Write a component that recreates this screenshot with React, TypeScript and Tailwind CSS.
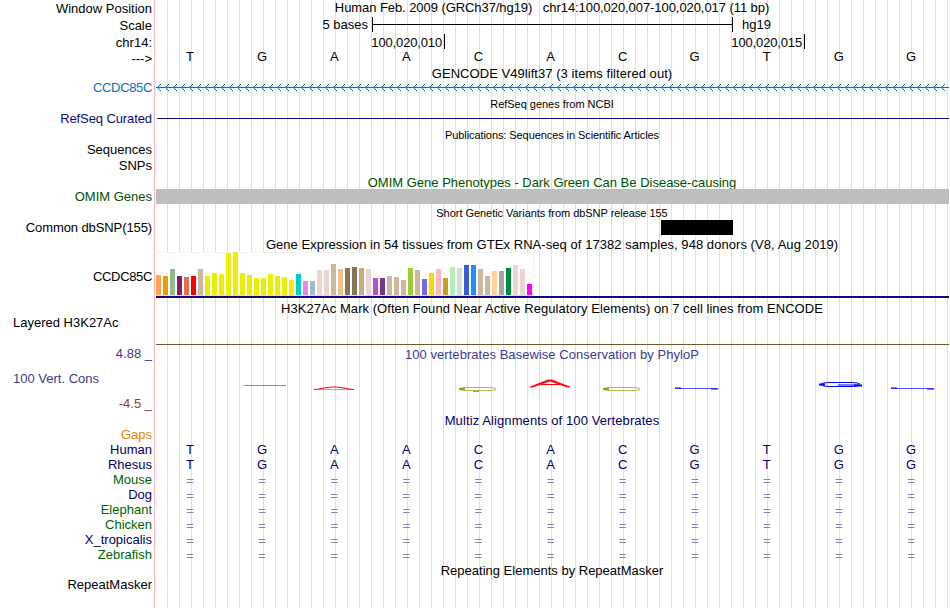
import React from 'react';

type Label = { text: string; className: string };

const labels: Label[] = [
  { text: 'Window Position', className: 'mt-px' },
  { text: 'Scale', className: 'mt-0.5' },
  { text: 'chr14:', className: 'mt-0.5' },
  { text: '--->', className: 'mt-px' },
  { text: 'CCDC85C', className: 'mt-[14px] tracking-[-0.35px] text-[#0c6eb4]' },
  { text: 'RefSeq Curated', className: 'mt-4 tracking-[-0.1px] text-[#0c0c78]' },
  { text: 'Sequences', className: 'mt-4' },
  { text: 'SNPs', className: 'mt-px' },
  { text: 'OMIM Genes', className: 'mt-4 text-[#005000]' },
  { text: 'Common dbSNP(155)', className: 'mt-4 tracking-[-0.1px]' },
  { text: 'CCDC85C', className: 'mt-[34px] tracking-[-0.35px]' },
  { text: 'Layered H3K27Ac', className: 'mt-[31px] self-start pl-[13px]' },
  { text: '4.88 _', className: 'mt-4 text-[#3c3c8c]' },
  { text: '100 Vert. Cons', className: 'mt-2.5 self-start pl-[13px] text-[#3c3c8c]' },
  { text: '-4.5 _', className: 'mt-2.5 text-[#8c3c3c]' },
  { text: 'Gaps', className: 'mt-4 text-[#e68200]' },
  { text: 'Human', className: 'text-[#000064]' },
  { text: 'Rhesus', className: 'text-[#000064]' },
  { text: 'Mouse', className: 'text-[#006400]' },
  { text: 'Dog', className: 'text-[#000064]' },
  { text: 'Elephant', className: 'text-[#006400]' },
  { text: 'Chicken', className: 'text-[#006400]' },
  { text: 'X_tropicalis', className: 'text-[#000064]' },
  { text: 'Zebrafish', className: 'text-[#006400]' },
  { text: 'RepeatMasker', className: 'mt-[15px]' },
];

const bases = 'TGAACACGTGG'.split('');

// [colour, height in px] for each of the 54 tissues
const tissues: [string, number][] = [
  ['#ffa54f', 20], ['#ee9a00', 19], ['#8fbc8f', 26], ['#8b1c62', 19], ['#ee6a50', 18], ['#ff0000', 19],
  ['#cdb79e', 26], ['#eeee00', 19], ['#eeee00', 22], ['#eeee00', 21], ['#eeee00', 42], ['#eeee00', 43],
  ['#eeee00', 22], ['#eeee00', 20], ['#eeee00', 17], ['#eeee00', 17], ['#eeee00', 21], ['#eeee00', 19],
  ['#eeee00', 18], ['#eeee00', 15], ['#00cdcd', 21], ['#ee82ee', 14], ['#9ac0cd', 14], ['#eed5d2', 25],
  ['#eed5d2', 25], ['#cdb79e', 31], ['#eec591', 26], ['#8b7355', 27], ['#8b7355', 28], ['#cdaa7d', 27],
  ['#eed5d2', 26], ['#b452cd', 17], ['#7a378b', 17], ['#cdb79e', 19], ['#cdb79e', 18], ['#cdb79e', 15],
  ['#9acd32', 27], ['#cdb79e', 25], ['#7a67ee', 16], ['#ffd700', 22], ['#ffb6c1', 26], ['#cd9b1d', 17],
  ['#b4eeb4', 28], ['#d9d9d9', 27], ['#3a5fcd', 30], ['#1e90ff', 30], ['#cdb79e', 26], ['#cdb79e', 19],
  ['#ffd39b', 24], ['#a6a6a6', 24], ['#008b45', 27], ['#eed5d2', 30], ['#eed5d2', 26], ['#ff00ff', 11],
];

const Title = ({ className, children }: { className: string; children: React.ReactNode }) => (
  <div className={`w-[794px] text-center whitespace-pre ${className}`}>{children}</div>
);

const BaseRow = ({ letters, className = '' }: { letters: string[]; className?: string }) => (
  <div className={`-ml-px grid h-[15px] w-[793px] grid-cols-11 text-center ${className}`}>
    {letters.map((letter, i) => (
      <span key={i}>{letter}</span>
    ))}
  </div>
);

const GeneArrows = () => (
  <svg className="mt-[3px] block" width="794" height="7" shapeRendering="crispEdges">
    <defs>
      <pattern id="arrow" x="1" width="8" height="7" patternUnits="userSpaceOnUse">
        <path d="M1 3h1v1h-1z M2 2h1v1h-1z M2 4h1v1h-1z M3 1h1v1h-1z M3 5h1v1h-1z M4 0h1v1h-1z M4 6h1v1h-1z" fill="#0c6eb4" />
      </pattern>
    </defs>
    <rect x="1" width="793" height="7" fill="url(#arrow)" />
    <rect x="1" y="3" width="793" height="1" fill="#0c6eb4" />
  </svg>
);

const ExpressionTrack = () => (
  <div>
    <div className="ml-px flex h-11 w-[378px] items-end gap-0.5 border-t border-r border-b border-[#f0f0f0] border-b-[#dcdcdc] bg-white">
      {tissues.map(([color, height], i) => (
        <div key={i} className="w-[5px] shrink-0" style={{ height, backgroundColor: color }} />
      ))}
    </div>
    <div className="ml-px h-0.5 bg-[#0c0c78]" />
  </div>
);

// Sequence logo, letters squashed to their conservation score
const ConservationLogo = () => (
  <svg className="mt-3 block" width="794" height="22" fill="none">
    <path d="M89 11.5h42" stroke="#7878ff" />
    <path d="M163 15.5h35" stroke="#b4b450" />
    <path d="M159 15.5q4 0 10-1.500q6-1 10-1t10 1q6 1.500 10 1.500" stroke="#f00" />
    <path d="M341 14.500q-2-1-6-1h-24q-6 0-6 1.500t6 1.500h24q4 0 6-1" stroke="#b4b450" />
    <path d="M304 15h6" stroke="#a0a000" strokeWidth="2" />
    <path d="M318 17.500h6" stroke="#0f0" />
    <path d="M375 13L378 13L395 7L412 13L415 13L397 6L393 6Z" fill="#f00" stroke="#f00" strokeWidth="0.800" />
    <path d="M386 10.500h18" stroke="#f00" />
    <path d="M485 14.500q-2-1-6-1h-24q-6 0-6 1.500t6 1.500h24q4 0 6-1" stroke="#b4b450" />
    <path d="M448 15h6" stroke="#a0a000" strokeWidth="2" />
    <path d="M520 14.500h43" stroke="#5050ff" />
    <path d="M520 14h6M556 15h7" stroke="#00f" />
    <path d="M705 10q-2-1.500-8-1.500h-20q-11 0-11 2t11 2h20q5 0 7-1.500h-21" stroke="#00f" />
    <path d="M664 10.500h6M699 11.500h8" stroke="#00f" strokeWidth="2" />
    <path d="M736 14.500h43" stroke="#5050ff" />
    <path d="M736 14h6M772 15h7" stroke="#00f" />
  </svg>
);

const App = () => {
  return (
    <div className="flex h-[608px] w-[950px] overflow-hidden bg-white font-['Liberation_Sans',Arial,sans-serif] text-[13px] leading-[15px] text-black">
      <div className="flex w-[155px] shrink-0 flex-col items-end border-r border-[#ffb4b4] pr-0.5 whitespace-pre">
        {labels.map(({ text, className }, i) => (
          <div key={i} className={`h-[15px] ${className}`}>
            {text}
          </div>
        ))}
      </div>

      <div className="w-[794px] shrink-0 bg-[repeating-linear-gradient(90deg,transparent_0_11px,#dcdcff_11px_12px)] bg-[position:1px_0]">
        {/* Position header */}
        <Title className="h-[15px] tracking-[-0.07px]">
          Human Feb. 2009 (GRCh37/hg19)   chr14:100,020,007-100,020,017 (11 bp)
        </Title>
        <div className="mt-0.5 flex h-[15px]">
          <span className="w-[213px] text-right">5 bases</span>
          <div className="ml-1 flex w-[361px] items-center border-x border-black">
            <div className="h-px w-full bg-black" />
          </div>
          <span className="ml-[9px]">hg19</span>
        </div>
        <div className="mt-0.5 flex h-[15px] text-right leading-[17px] tracking-[-0.15px]">
          <div className="w-[290px] border-r border-black pr-0.5">100,020,010</div>
          <div className="w-[360px] border-r border-black pr-0.5">100,020,015</div>
        </div>
        <BaseRow letters={bases} />

        {/* Genes */}
        <Title className="mt-0.5 h-[15px] tracking-[0.05px]">GENCODE V49lift37 (3 items filtered out)</Title>
        <GeneArrows />
        <Title className="mt-[7px] h-3 text-[11px] leading-3 tracking-[-0.03px]">RefSeq genes from NCBI</Title>
        <div className="mt-2 ml-0.5 h-px bg-[#0c0c78]" />
        <Title className="mt-2.5 h-3 text-[11px] leading-3 tracking-[-0.08px]">
          Publications: Sequences in Scientific Articles
        </Title>
        <Title className="mt-[34px] h-[14px] overflow-hidden text-[#005000]">
          OMIM Gene Phenotypes - Dark Green Can Be Disease-causing
        </Title>
        <div className="ml-px h-[15px] bg-[#bebebe]" />

        {/* Variants */}
        <Title className="mt-[3px] h-3 text-[11px] leading-3 tracking-[-0.04px]">
          Short Genetic Variants from dbSNP release 155
        </Title>
        <div className="mt-px ml-[506px] h-[15px] w-[72px] bg-black" />

        {/* Expression and regulation */}
        <Title className="mt-0.5 h-[15px] tracking-[0.055px]">
          Gene Expression in 54 tissues from GTEx RNA-seq of 17382 samples, 948 donors (V8, Aug 2019)
        </Title>
        <ExpressionTrack />
        <Title className="mt-[3px] h-[15px] tracking-[0.05px]">
          H3K27Ac Mark (Often Found Near Active Regulatory Elements) on 7 cell lines from ENCODE
        </Title>
        <div className="mt-7 ml-px h-px bg-[#6e5a28]" />

        {/* Conservation */}
        <Title className="mt-0.5 h-[15px] tracking-[0.04px] text-[#3c3c8c]">
          100 vertebrates Basewise Conservation by PhyloP
        </Title>
        <ConservationLogo />
        <Title className="mt-[17px] h-[15px] tracking-[0.1px] text-[#000064]">Multiz Alignments of 100 Vertebrates</Title>
        <BaseRow letters={bases} className="mt-[14px] text-[#000064]" />
        <BaseRow letters={bases} className="text-[#000064]" />
        {['Mouse', 'Dog', 'Elephant', 'Chicken', 'X_tropicalis', 'Zebrafish'].map((species) => (
          <BaseRow key={species} letters={bases.map(() => '=')} className="leading-[17px] text-[#8080b2]" />
        ))}
        <Title className="mt-px h-[15px]">Repeating Elements by RepeatMasker</Title>
      </div>
    </div>
  );
};

export default App;
